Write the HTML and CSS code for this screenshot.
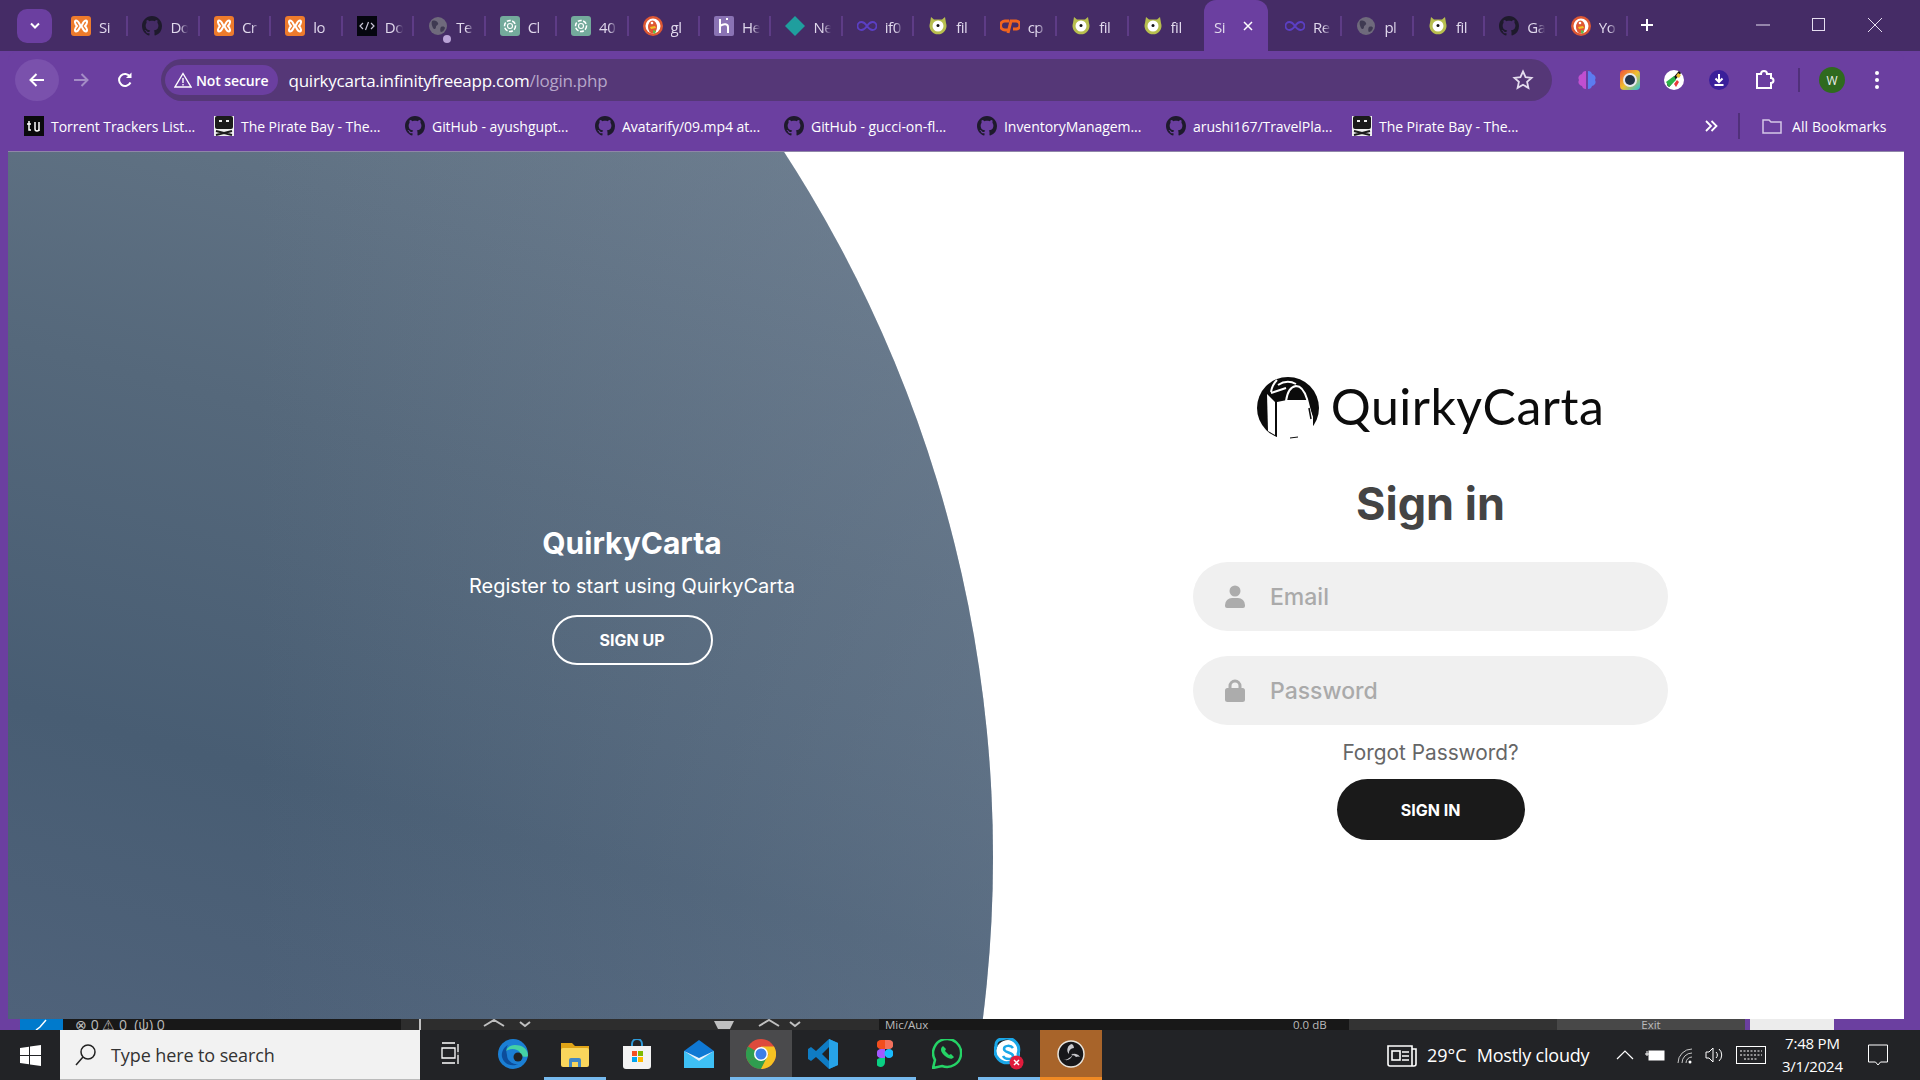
FILE: index.html
```html
<!DOCTYPE html>
<html lang="en">
<head>
  <meta charset="UTF-8" />
  <title>Sign in | QuirkyCarta</title>
  <link rel="stylesheet" href="styles.css">
</head>
<body>

  <svg class="defs" width="0" height="0">
    <symbol id="i-xampp" viewBox="0 0 20 20">
      <rect width="20" height="20" rx="3" fill="#ee7b2c"/>
      <path d="M5 4.500c3 0 3 4 5 5.500 2-1.500 2-5.500 5-5.500 1.500 0 1.500 3-1 5.500 2.500 2.500 2.500 5.500 1 5.500-3 0-3-4-5-5.500-2 1.500-2 5.500-5 5.500-1.500 0-1.500-3 1-5.500-2.500-2.500-2.500-5.500-1-5.500z" fill="none" stroke="#fff" stroke-width="2"/>
    </symbol>
    <symbol id="i-github" viewBox="0 0 16 16">
      <path fill="#1e1a2c" d="M8 0C3.58 0 0 3.58 0 8c0 3.54 2.29 6.53 5.47 7.59.4.07.55-.17.55-.38 0-.19-.01-.82-.01-1.49-2.01.37-2.53-.49-2.69-.94-.09-.23-.48-.94-.82-1.13-.28-.15-.68-.52-.01-.53.63-.01 1.08.58 1.23.82.72 1.21 1.87.87 2.33.66.07-.52.28-.87.51-1.07-1.78-.2-3.64-.89-3.64-3.95 0-.87.31-1.59.82-2.15-.08-.2-.36-1.02.08-2.12 0 0 .67-.21 2.2.82.64-.18 1.32-.27 2-.27.68 0 1.36.09 2 .27 1.53-1.04 2.2-.82 2.2-.82.44 1.1.16 1.92.08 2.12.51.56.82 1.27.82 2.15 0 3.07-1.87 3.75-3.65 3.95.29.25.54.73.54 1.48 0 1.07-.01 1.93-.01 2.2 0 .21.15.46.55.38A8.013 8.013 0 0016 8c0-4.42-3.58-8-8-8z"/>
    </symbol>
    <symbol id="i-dev" viewBox="0 0 20 20">
      <rect width="20" height="20" fill="#05060f"/>
      <path d="M6 7l-3 3 3 3M14 7l3 3-3 3M11.500 6l-3 8" fill="none" stroke="#c9c6d8" stroke-width="1.200"/>
    </symbol>
    <symbol id="i-globe" viewBox="0 0 20 20">
      <circle cx="10" cy="10" r="9" fill="#6f6a7c"/>
      <path d="M4 5c3-1 5 0 6 2s-2 2-2 4-2 3-3 1-2-5-1-7zM13 11c2-1 4 0 4 1-1 3-3 4-4 4s-1-4 0-5z" fill="#3f3a52"/>
    </symbol>
    <symbol id="i-gpt" viewBox="0 0 20 20">
      <rect width="20" height="20" rx="3" fill="#74aa9c"/>
      <circle cx="10" cy="10" r="5.500" fill="none" stroke="#fff" stroke-width="1.500" stroke-dasharray="4 1.500"/>
      <circle cx="10" cy="10" r="2.500" fill="none" stroke="#fff" stroke-width="1.100"/>
    </symbol>
    <symbol id="i-ddg" viewBox="0 0 20 20">
      <circle cx="10" cy="10" r="10" fill="#de5833"/>
      <circle cx="10" cy="10" r="7.500" fill="#fff"/>
      <ellipse cx="9.500" cy="11" rx="4.500" ry="6.500" fill="#de5833"/>
      <circle cx="9" cy="7" r="1.300" fill="#fff"/>
      <path d="M7 11l5-1 1 2-5 1z" fill="#f3c326"/>
      <path d="M10 14l3 1-1 3-2-1z" fill="#65bc46"/>
    </symbol>
    <symbol id="i-heroku" viewBox="0 0 20 20">
      <rect width="20" height="20" rx="2" fill="#8a73b4"/>
      <path d="M6 3v14M6 10c4-3 8-2 8 1v6M12 3l2 0" fill="none" stroke="#fff" stroke-width="2"/>
    </symbol>
    <symbol id="i-diamond" viewBox="0 0 20 20">
      <path d="M10 0l10 10-10 10L0 10z" fill="#1f9e9e"/>
    </symbol>
    <symbol id="i-inf" viewBox="0 0 20 20">
      <path d="M10 10c-2-3-3.500-4-5.500-4a4 4 0 000 8c2 0 3.500-1 5.500-4s3.500-4 5.500-4a4 4 0 010 8c-2 0-3.500-1-5.500-4z" fill="none" stroke="#5b3fc4" stroke-width="1.800"/>
    </symbol>
    <symbol id="i-monster" viewBox="0 0 20 20">
      <path d="M3 1l3 2.500h8L17 1l1 6a8.500 8.500 0 11-16 0z" fill="#b7be4e"/>
      <circle cx="10" cy="10" r="5.500" fill="#fff"/>
      <circle cx="10" cy="9.500" r="1.500" fill="#111"/>
    </symbol>
    <symbol id="i-cp" viewBox="0 0 20 20">
      <path d="M9 5H5a4 4 0 000 9h2.500M8 17L11 5h5a4 4 0 010 8h-3" fill="none" stroke="#f0641e" stroke-width="3"/>
    </symbol>
    <symbol id="i-tu" viewBox="0 0 20 20">
      <rect width="20" height="20" fill="#0a0a0c"/>
      <path d="M5 5v9h2M3 8h4M11 6v7a2 2 0 004 0V6M15 6v9" fill="none" stroke="#fff" stroke-width="1.500"/>
    </symbol>
    <symbol id="i-pirate" viewBox="0 0 20 20">
      <rect width="20" height="20" fill="#f0f0f0"/>
      <rect x="1" y="0" width="18" height="13" rx="2" fill="#1b1b1b"/>
      <rect x="5" y="4" width="3" height="2" fill="#eee"/>
      <rect x="12" y="4" width="3" height="2" fill="#eee"/>
      <path d="M2 15l16 4M18 15L2 19" stroke="#1b1b1b" stroke-width="2"/>
    </symbol>
    <symbol id="i-x" viewBox="0 0 12 12">
      <path d="M2 2l8 8M10 2l-8 8" fill="none" stroke="currentColor" stroke-width="1.500"/>
    </symbol>
  </svg>

  <div class="browser">
    <div class="tabstrip">
      <div class="tablist-btn">
        <svg width="12" height="8" viewBox="0 0 12 8"><path d="M2 1.500l4 4 4-4" fill="none" stroke="#fff" stroke-width="2"/></svg>
      </div>
      <div class="tab"><svg class="fav"><use href="#i-xampp"/></svg><span class="tab-title">Si</span></div>
      <div class="tab"><svg class="fav"><use href="#i-github"/></svg><span class="tab-title">Do</span></div>
      <div class="tab"><svg class="fav"><use href="#i-xampp"/></svg><span class="tab-title">Cr</span></div>
      <div class="tab"><svg class="fav"><use href="#i-xampp"/></svg><span class="tab-title">lo</span></div>
      <div class="tab"><svg class="fav"><use href="#i-dev"/></svg><span class="tab-title">Do</span></div>
      <div class="tab tab-loading"><svg class="fav"><use href="#i-globe"/></svg><span class="tab-title">Te</span></div>
      <div class="tab"><svg class="fav"><use href="#i-gpt"/></svg><span class="tab-title">Cl</span></div>
      <div class="tab"><svg class="fav"><use href="#i-gpt"/></svg><span class="tab-title">40</span></div>
      <div class="tab"><svg class="fav"><use href="#i-ddg"/></svg><span class="tab-title">gl</span></div>
      <div class="tab"><svg class="fav"><use href="#i-heroku"/></svg><span class="tab-title">He</span></div>
      <div class="tab"><svg class="fav"><use href="#i-diamond"/></svg><span class="tab-title">Ne</span></div>
      <div class="tab"><svg class="fav"><use href="#i-inf"/></svg><span class="tab-title">if0</span></div>
      <div class="tab"><svg class="fav"><use href="#i-monster"/></svg><span class="tab-title">fil</span></div>
      <div class="tab"><svg class="fav"><use href="#i-cp"/></svg><span class="tab-title">cp</span></div>
      <div class="tab"><svg class="fav"><use href="#i-monster"/></svg><span class="tab-title">fil</span></div>
      <div class="tab tab-before-active"><svg class="fav"><use href="#i-monster"/></svg><span class="tab-title">fil</span></div>
      <div class="tab tab-active"><span class="tab-title">Si</span><svg class="tab-close"><use href="#i-x"/></svg></div>
      <div class="tab"><svg class="fav"><use href="#i-inf"/></svg><span class="tab-title">Re</span></div>
      <div class="tab"><svg class="fav"><use href="#i-globe"/></svg><span class="tab-title">pl</span></div>
      <div class="tab"><svg class="fav"><use href="#i-monster"/></svg><span class="tab-title">fil</span></div>
      <div class="tab"><svg class="fav"><use href="#i-github"/></svg><span class="tab-title">Ga</span></div>
      <div class="tab"><svg class="fav"><use href="#i-ddg"/></svg><span class="tab-title">Yo</span></div>
      <svg class="new-tab" width="16" height="16" viewBox="0 0 16 16"><path d="M8 2v12M2 8h12" stroke="#fff" stroke-width="2"/></svg>
      <div class="win-controls">
        <svg width="16" height="16" viewBox="0 0 16 16"><path d="M1 8h14" stroke="#e6def0" stroke-width="1"/></svg>
        <svg width="16" height="16" viewBox="0 0 16 16"><rect x="1.500" y="1.500" width="12" height="12" fill="none" stroke="#e6def0"/></svg>
        <svg width="16" height="16" viewBox="0 0 16 16"><path d="M1 1l14 14M15 1L1 15" stroke="#e6def0"/></svg>
      </div>
    </div>

    <div class="window">
      <div class="toolbar">
        <div class="nav-btn nav-back">
          <svg width="20" height="20" viewBox="0 0 20 20"><path d="M17 10H4M9.500 4L3.500 10l6 6" fill="none" stroke="#fff" stroke-width="2"/></svg>
        </div>
        <div class="nav-btn">
          <svg width="20" height="20" viewBox="0 0 20 20"><path d="M3 10h13M10.500 4l6 6-6 6" fill="none" stroke="#a48cc6" stroke-width="2"/></svg>
        </div>
        <div class="nav-btn">
          <svg width="20" height="20" viewBox="0 0 20 20"><path d="M15.500 12.500A6 6 0 1115 6.500" fill="none" stroke="#fff" stroke-width="2"/><path d="M16.500 2.500v5.500H11z" fill="#fff"/></svg>
        </div>
        <div class="omnibox">
          <div class="security-chip">
            <svg width="18" height="16" viewBox="0 0 18 16"><path d="M9 1.500L1 15h16zM9 6v5M9 12v1.500" fill="none" stroke="#fff" stroke-width="1.400"/></svg>
            <span>Not secure</span>
          </div>
          <div class="url">quirkycarta.infinityfreeapp.com<span class="url-path">/login.php</span></div>
          <svg class="star" width="22" height="22" viewBox="0 0 22 22"><path d="M11 2.500l2.600 5.600 6 .7-4.500 4.100 1.300 6L11 15.800l-5.400 3.100 1.300-6-4.500-4.100 6-.7z" fill="none" stroke="#e4dcee" stroke-width="1.800"/></svg>
        </div>
        <div class="ext-icons">
          <svg width="20" height="22" viewBox="0 0 20 22"><path d="M9 2a4 4 0 00-4 3 4 4 0 00-3 6 4 4 0 003 6 4 4 0 004 3z" fill="#c04fd0"/><path d="M11 2a4 4 0 014 3 4 4 0 013 6 4 4 0 01-3 6 4 4 0 01-4 3z" fill="#5c7cf0"/></svg>
          <svg width="20" height="22" viewBox="0 0 20 22"><defs><linearGradient id="cam" x1="0" y1="0" x2="1" y2="1"><stop offset="0" stop-color="#f0503c"/><stop offset=".5" stop-color="#f0c030"/><stop offset="1" stop-color="#20c0e0"/></linearGradient></defs><rect y="1" width="20" height="20" rx="4" fill="url(#cam)"/><circle cx="10" cy="11" r="7" fill="#e8e8f0"/><circle cx="10" cy="11" r="5" fill="#23324a"/></svg>
          <svg width="22" height="22" viewBox="0 0 22 22"><circle cx="11" cy="11" r="10" fill="#fff"/><path d="M17 3L5 17" stroke="#111" stroke-width="3"/><path d="M3 13l8-6 2 4-7 7z" fill="#2cb34a"/><path d="M11 15l3-4 2 2-3 5z" fill="#e83c3c"/><path d="M15 4l3 2-2 3-3-2z" fill="#f0c030"/></svg>
          <svg width="22" height="22" viewBox="0 0 22 22"><circle cx="11" cy="11" r="10" fill="#3a1f9a"/><path d="M11 5v7M7.500 9.500L11 13l3.500-3.500M6.500 16h9" fill="none" stroke="#fff" stroke-width="2"/></svg>
          <svg width="22" height="22" viewBox="0 0 22 22"><path d="M4 5h4a3 3 0 016 0h4v4a2.500 2.500 0 010 5v5H4z" fill="none" stroke="#fff" stroke-width="2"/></svg>
          <span class="toolbar-sep"></span>
          <span class="avatar">W</span>
          <svg class="kebab" width="6" height="20" viewBox="0 0 6 20"><circle cx="3" cy="3" r="2" fill="#fff"/><circle cx="3" cy="10" r="2" fill="#fff"/><circle cx="3" cy="17" r="2" fill="#fff"/></svg>
        </div>
      </div>

      <div class="bookmarks">
        <a class="bookmark bm-1"><svg class="fav"><use href="#i-tu"/></svg>Torrent Trackers List...</a>
        <a class="bookmark bm-2"><svg class="fav"><use href="#i-pirate"/></svg>The Pirate Bay - The...</a>
        <a class="bookmark bm-3"><svg class="fav"><use href="#i-github"/></svg>GitHub - ayushgupt...</a>
        <a class="bookmark bm-4"><svg class="fav"><use href="#i-github"/></svg>Avatarify/09.mp4 at...</a>
        <a class="bookmark bm-5"><svg class="fav"><use href="#i-github"/></svg>GitHub - gucci-on-fl...</a>
        <a class="bookmark bm-6"><svg class="fav"><use href="#i-github"/></svg>InventoryManagem...</a>
        <a class="bookmark bm-7"><svg class="fav"><use href="#i-github"/></svg>arushi167/TravelPla...</a>
        <a class="bookmark bm-8"><svg class="fav"><use href="#i-pirate"/></svg>The Pirate Bay - The...</a>
        <svg class="bm-more" width="14" height="12" viewBox="0 0 14 12"><path d="M2 1l5 5-5 5M7.500 1l5 5-5 5" fill="none" stroke="#fff" stroke-width="1.800"/></svg>
        <span class="bm-sep"></span>
        <a class="bookmark all-bm">
          <svg width="20" height="16" viewBox="0 0 20 16"><path d="M1 2h6l2 2h10v11H1z" fill="none" stroke="#d5c8e6" stroke-width="1.500"/></svg>
          All Bookmarks
        </a>
      </div>

      <main class="page">
        <section class="panel">
          <div class="panel-content">
            <h3>QuirkyCarta</h3>
            <p>Register to start using QuirkyCarta</p>
            <button class="btn-outline" type="button">SIGN UP</button>
          </div>
        </section>

        <section class="signin">
          <div class="brand">
            <svg class="brand-logo" width="62" height="62" viewBox="0 0 62 62">
              <circle cx="31" cy="31" r="31" fill="#0b0b0b"/>
              <path d="M10 17l8 8v33l-7-4z" fill="#fff"/>
              <path d="M20 25l10-2h20l6 17v12l-9 10H20z" fill="#fff"/>
              <path d="M20 3Q15 8 14 15" fill="none" stroke="#fff" stroke-width="2"/>
              <path d="M14 16l15-5" fill="none" stroke="#fff" stroke-width="2"/>
              <path d="M29 24Q31 10 39 9q7 0 11 13l5 20" fill="none" stroke="#fff" stroke-width="2"/>
              <path d="M21 8q9-6 18-1" fill="none" stroke="#fff" stroke-width="2"/>
              <path d="M52 31l2 11" stroke="#0b0b0b" stroke-width="1.500"/>
              <path d="M33 61l8-1" stroke="#0b0b0b" stroke-width="1"/>
            </svg>
            <span class="brand-name">QuirkyCarta</span>
          </div>
          <h2>Sign in</h2>
          <form class="signin-form">
            <label class="field">
              <svg width="20" height="23" viewBox="0 0 20 23"><circle cx="10" cy="6" r="5.500" fill="#acacac"/><path d="M0 20a7 7 0 017-7h6a7 7 0 017 7v1a2 2 0 01-2 2H2a2 2 0 01-2-2z" fill="#acacac"/></svg>
              <input type="text" placeholder="Email">
            </label>
            <label class="field">
              <svg width="20" height="23" viewBox="0 0 20 23"><path d="M5 10V7a5 5 0 0110 0v3" fill="none" stroke="#acacac" stroke-width="3"/><rect y="9" width="20" height="14" rx="2.500" fill="#acacac"/></svg>
              <input type="password" placeholder="Password">
            </label>
            <a class="forgot">Forgot Password?</a>
            <button class="btn-solid" type="button">SIGN IN</button>
          </form>
        </section>
      </main>
    </div>

    <div class="behind">
      <div class="behind-edge"></div>
      <div class="behind-vs"><svg width="16" height="11" viewBox="0 0 16 11"><path d="M2 11l4-3 6-7" fill="none" stroke="#fff" stroke-width="1.500"/></svg></div>
      <div class="behind-status">⊗ 0 ⚠ 0 &nbsp;(ψ) 0</div>
      <div class="behind-obs">
        <svg width="478" height="11" viewBox="0 0 478 11"><path d="M19 0v11M83 7l10-6 10 6M119 3l5 4 5-4M358 7l10-6 10 6M389 3l5 4 5-4" fill="none" stroke="#c0c0c0" stroke-width="2"/><path d="M313 2h20l-4 8h-12z" fill="#c0c0c0"/></svg>
      </div>
      <div class="behind-mic">Mic/Aux</div>
      <div class="behind-db">0.0 dB</div>
      <div class="behind-grey"></div>
      <div class="behind-exit">Exit</div>
      <div class="behind-white"></div>
      <div class="behind-purple"></div>
    </div>
  </div>

  <footer class="taskbar">
    <div class="start">
      <svg width="21" height="21" viewBox="0 0 21 21"><path d="M0 3l9-1.300V10H0zM10 1.500L21 0v10H10zM0 11h9v8.300L0 18zM10 11h11v10l-11-1.500z" fill="#fff"/></svg>
    </div>
    <div class="search">
      <svg width="22" height="24" viewBox="0 0 22 24"><circle cx="13" cy="9" r="7" fill="none" stroke="#222" stroke-width="1.500"/><path d="M8 14l-7 8" stroke="#222" stroke-width="1.500"/></svg>
      <span>Type here to search</span>
    </div>
    <div class="task-apps">
      <div class="app">
        <svg width="20" height="24" viewBox="0 0 20 24"><path d="M1 1h13M1 6h13v10H1zM1 21h13M17 2v20" fill="none" stroke="#fff" stroke-width="1.300"/><path d="M17 10v3" stroke="#222" stroke-width="1.500"/></svg>
      </div>
      <div class="app">
        <svg width="30" height="30" viewBox="0 0 30 30"><circle cx="15" cy="15" r="15" fill="#1b7fd4"/><path d="M30 17c0-8-7-11-13-11-6 0-9 4-10 7 3-3 8-4 12-2 3 1 4 4 3 6 4 1 8 1 8 0z" fill="#45d2a4"/><path d="M9 16c0 6 6 10 11 9-5 3-14 1-16-7-1-5 2-10 6-12-2 3-2 6-1 10z" fill="#0c4d9b"/><circle cx="20" cy="18" r="4.500" fill="#222"/></svg>
      </div>
      <div class="app app-open">
        <svg width="28" height="28" viewBox="0 0 28 28"><path d="M0 3h11l3 3h14v4H0z" fill="#e0a417"/><rect y="8" width="28" height="19" rx="2" fill="#f9d65c"/><path d="M8 27v-7a2 2 0 012-2h8a2 2 0 012 2v7h-3v-5h-6v5z" fill="#4287c4"/></svg>
      </div>
      <div class="app">
        <svg width="28" height="30" viewBox="0 0 28 30"><path d="M9 7V5a5 5 0 0110 0v2" fill="none" stroke="#2e9ad8" stroke-width="2"/><path d="M0 7h28v20a3 3 0 01-3 3H3a3 3 0 01-3-3z" fill="#f3f3f3"/><rect x="9" y="12" width="5" height="5" fill="#f25022"/><rect x="15" y="12" width="5" height="5" fill="#7fba00"/><rect x="9" y="18" width="5" height="5" fill="#00a4ef"/><rect x="15" y="18" width="5" height="5" fill="#ffb900"/></svg>
      </div>
      <div class="app">
        <svg width="30" height="28" viewBox="0 0 30 28"><path d="M0 11L15 0l15 11v17H0z" fill="#0f78d4"/><path d="M0 11l15 10 15-10v17H0z" fill="#3ec0f5"/><path d="M0 11l15 10 15-10-15 7z" fill="#e8f4fc"/></svg>
      </div>
      <div class="app app-open app-active">
        <svg width="30" height="30" viewBox="0 0 30 30"><circle cx="15" cy="15" r="15" fill="#de4a3c"/><path d="M15 15L2 22.500A15 15 0 0015 30l7.500-13z" fill="#2f9e4f"/><path d="M15 15l7.500 0L15 30A15 15 0 0028 7.500H15z" fill="#f5c222"/><path d="M15 15L2 22.500A15 15 0 012 7.500z" fill="#2f9e4f"/><circle cx="15" cy="15" r="7" fill="#fff"/><circle cx="15" cy="15" r="5.500" fill="#3d7fe8"/></svg>
      </div>
      <div class="app app-open">
        <svg width="30" height="30" viewBox="0 0 30 30"><path d="M21 0l9 4v22l-9 4L8 18l-5 4-3-2v-10l3-2 5 4z" fill="#0f7cc4"/><path d="M21 0l9 4v22l-9 4z" fill="#27a3e8"/><path d="M21 8l-7 7 7 7z" fill="#222"/></svg>
      </div>
      <div class="app app-open">
        <svg width="16" height="28" viewBox="0 0 16 28"><path d="M8 0h4a4.500 4.500 0 010 9H8z" fill="#f2705c"/><path d="M8 0H4a4.500 4.500 0 000 9h4z" fill="#f24e1e"/><path d="M8 9H4a4.500 4.500 0 000 9h4z" fill="#a259ff"/><circle cx="12" cy="13.500" r="4.500" fill="#1abcfe"/><path d="M8 18H4a4.500 4.500 0 104 4.500z" fill="#0acf83"/></svg>
      </div>
      <div class="app">
        <svg width="30" height="30" viewBox="0 0 30 30"><path d="M1 29l2-8A14 14 0 1110 27z" fill="none" stroke="#25d366" stroke-width="2.500"/><path d="M10 8c-2 2-1 6 3 9s7 4 9 1l-3-3-2 1-4-4 1-2-3-3z" fill="#25d366"/></svg>
      </div>
      <div class="app app-open app-skype">
        <svg width="30" height="32" viewBox="0 0 30 32"><circle cx="14" cy="14" r="12" fill="#fff"/><path d="M8 1a6 6 0 00-6 7 12 12 0 0015 16 6 6 0 007-8A12 12 0 008 1z" fill="none" stroke="#1aa7e8" stroke-width="3"/><path d="M19 10c-2-3-9-3-9 1s9 3 9 7-8 4-10 0" fill="none" stroke="#1aa7e8" stroke-width="2.500"/><circle cx="22.500" cy="24.500" r="7" fill="#e01b3c"/><path d="M20 22l5 5M25 22l-5 5" stroke="#fff" stroke-width="1.500"/></svg>
      </div>
      <div class="app app-obs">
        <svg width="28" height="28" viewBox="0 0 28 28"><circle cx="14" cy="14" r="13" fill="#17171a" stroke="#e8e4dc" stroke-width="1.500"/><path d="M15 4a6 6 0 00-3 10 5 5 0 015-6 5 5 0 00-2-4zM6 19a6 6 0 009-7 5 5 0 01-3 6 5 5 0 01-6 1zM23 17a6 6 0 00-9-2 5 5 0 015 2 5 5 0 014 0z" fill="#c8c8cc"/></svg>
      </div>
    </div>

    <div class="tray">
      <svg class="news" width="30" height="24" viewBox="0 0 30 24"><path d="M1 3h24v20H3a2 2 0 01-2-2zM25 6h4v15a2 2 0 01-2 2h-2" fill="none" stroke="#fff" stroke-width="1.600"/><rect x="5" y="8" width="8" height="9" fill="none" stroke="#fff" stroke-width="1.600"/><path d="M15 9h7M15 13h7M15 17h7" stroke="#fff" stroke-width="1.600"/></svg>
      <span class="temp">29°C</span>
      <span class="weather">Mostly cloudy</span>
      <svg class="chev" width="18" height="10" viewBox="0 0 18 10"><path d="M1 9l8-8 8 8" fill="none" stroke="#fff" stroke-width="1.200"/></svg>
      <svg class="tray-ic" width="20" height="14" viewBox="0 0 20 14"><rect x="4" y="3" width="15" height="9" fill="#fff" stroke="#fff"/><path d="M0 6h4M2 3v5" stroke="#fff"/></svg>
      <svg class="tray-ic" width="18" height="18" viewBox="0 0 18 18"><path d="M2 17A14 14 0 0116 3M6 17A10 10 0 0116 7M10 17a6 6 0 016-6" fill="none" stroke="#c8c8c8"/><circle cx="14" cy="16" r="1.500" fill="#fff"/></svg>
      <svg class="tray-ic" width="20" height="18" viewBox="0 0 20 18"><path d="M1 6h3l4-4v14l-4-4H1zM11 6a4 4 0 010 6M14 3a8 8 0 010 12" fill="none" stroke="#fff" stroke-width="1"/></svg>
      <svg class="tray-ic" width="30" height="18" viewBox="0 0 30 18"><rect x=".5" y=".5" width="29" height="17" fill="none" stroke="#fff"/><path d="M4 5h22M4 9h22M8 13h14" stroke="#fff" stroke-dasharray="2 1.500"/></svg>
      <div class="clock"><div>7:48 PM</div><div>3/1/2024</div></div>
      <svg class="notif" width="20" height="22" viewBox="0 0 20 22"><path d="M.500 1h19v17h-7l-2.500 3-2.500-3h-7z" fill="none" stroke="#fff"/></svg>
    </div>
  </footer>

</body>
</html>
```

FILE: styles.css
```css
* {
  box-sizing: border-box;
}

html, body {
  margin: 0;
  height: 100%;
}

body {
  width: 1920px;
  height: 1080px;
  overflow: hidden;
  display: flex;
  flex-direction: column;
  background: #6b3fa0;
  font-family: "Open Sans", "Noto Sans", sans-serif;
}

.defs {
  position: absolute;
}

.browser {
  height: 1030px;
  display: flex;
  flex-direction: column;
}

/* tab strip */

.tabstrip {
  height: 51px;
  flex: none;
  display: flex;
  align-items: flex-start;
  background: #452c66;
  padding-left: 17px;
  color: #e0d8ec;
}

.tablist-btn {
  width: 35px;
  height: 34px;
  margin: 9px 5px 0 0;
  flex: none;
  display: flex;
  align-items: center;
  justify-content: center;
  background: #6b3fa0;
  border-radius: 10px;
}

.tab {
  width: 71.45px;
  height: 42px;
  margin-top: 9px;
  flex: none;
  display: flex;
  align-items: flex-start;
  gap: 8px;
  padding: 7px 0 0 14px;
  background: linear-gradient(#5e3c86, #5e3c86) right 7px / 2px 20px no-repeat;
}

.tab .fav {
  width: 20px;
  height: 20px;
  flex: none;
}

.tab-title {
  width: 20px;
  white-space: nowrap;
  font-size: 15px;
  line-height: 22px;
  letter-spacing: -0.5px;
  -webkit-mask-image: linear-gradient(90deg, #000 50%, transparent 90%);
  mask-image: linear-gradient(90deg, #000 50%, transparent 90%);
}

.tab-before-active {
  background: none;
}

.tab-loading {
  position: relative;
}

.tab-loading::after {
  content: "";
  position: absolute;
  left: 29px;
  top: 26px;
  width: 8px;
  height: 8px;
  border-radius: 50%;
  background: #b9a3d6;
}

.tab-active {
  width: 64px;
  height: 51px;
  margin: 0 0 0 4px;
  padding: 16px 0 0 10px;
  gap: 8px;
  background: #6b3fa0;
  border-radius: 12px 12px 0 0;
}

.tab-active + .tab {
  margin-left: 3px;
}

.tab-close {
  width: 12px;
  height: 12px;
  margin-top: 4px;
  color: #fff;
  flex: none;
}

.new-tab {
  margin: 17px 0 0 11px;
}

.win-controls {
  margin-left: auto;
  display: flex;
  gap: 40px;
  padding: 17px 37px 0 0;
}

/* toolbar */

.window {
  flex: 1;
  margin: 0 16px 0 8px;
  min-height: 0;
  display: flex;
  flex-direction: column;
}

.toolbar {
  height: 50px;
  flex: none;
  display: flex;
  align-items: center;
  background: #6b3fa0;
  border-radius: 10px 10px 0 0;
  padding: 8px 0 0 7px;
}

.nav-btn {
  width: 44px;
  height: 42px;
  flex: none;
  display: flex;
  align-items: center;
  justify-content: center;
  border-radius: 50%;
}

.nav-back {
  background: #7a51ac;
}

.omnibox {
  width: 1391px;
  height: 42px;
  margin-left: 14px;
  flex: none;
  display: flex;
  align-items: center;
  padding: 0 18px 0 4px;
  background: #553777;
  border-radius: 21px;
}

.security-chip {
  height: 30px;
  display: flex;
  align-items: center;
  gap: 4px;
  padding: 0 9px;
  background: #6b3fa0;
  border-radius: 15px;
  color: #fff;
  font-size: 14px;
  font-weight: 600;
  letter-spacing: -0.1px;
}

.url {
  margin-left: 11px;
  color: #fff;
  font-size: 17px;
  letter-spacing: -0.25px;
}

.url-path {
  color: #b5a6c9;
}

.star {
  margin-left: auto;
}

.ext-icons {
  flex: 1;
  display: flex;
  align-items: center;
  padding-left: 25px;
  gap: 23px;
}

.toolbar-sep {
  width: 2px;
  height: 24px;
  background: #50307a;
}

.avatar {
  width: 26px;
  height: 26px;
  margin-left: -4px;
  display: flex;
  align-items: center;
  justify-content: center;
  border-radius: 50%;
  background: #2f6a1e;
  color: #eee;
  font-size: 12px;
}

.kebab {
  margin-left: 6px;
}

/* bookmarks */

.bookmarks {
  height: 51px;
  flex: none;
  display: flex;
  align-items: center;
  background: #6b3fa0;
  padding-left: 16px;
  color: #fff;
  font-size: 14px;
  letter-spacing: -0.05px;
  border-bottom: 1px solid #8f86a8;
}

.bookmark {
  display: flex;
  align-items: center;
  gap: 7px;
  white-space: nowrap;
  flex: none;
}

.bookmark .fav {
  width: 20px;
  height: 20px;
  flex: none;
}

.bm-1 { width: 190px; }
.bm-2 { width: 191px; }
.bm-3 { width: 190px; }
.bm-4 { width: 189px; }
.bm-5 { width: 193px; }
.bm-6 { width: 189px; }
.bm-7 { width: 186px; }
.bm-8 { width: 352px; }

.bm-sep {
  width: 2px;
  height: 26px;
  margin: 0 22px 0 20px;
  background: #50307a;
}

.all-bm {
  gap: 10px;
  letter-spacing: 0.1px;
}

/* login page */

.page {
  flex: 1;
  min-height: 0;
  display: grid;
  grid-template-columns: 985px 1fr;
  background: #fff;
  overflow: hidden;
}

.panel {
  display: flex;
  align-items: center;
  justify-content: center;
  padding: 18px 0 0 263px;
  background:
    linear-gradient(90deg, rgba(130, 145, 165, 0) 25%, rgba(130, 145, 165, 0.3) 100%),
    linear-gradient(195deg, #68798a 0%, #55687b 40%, #485d73 72%, #4f627a 100%);
  clip-path: circle(1294px at -309px 705px);
  color: #fff;
}

.panel-content {
  width: 400px;
  display: flex;
  flex-direction: column;
  align-items: center;
  text-align: center;
  font-family: "Inter", sans-serif;
}

.panel-content h3 {
  margin: 0;
  font-size: 30px;
  font-weight: 700;
  line-height: 38px;
}

.panel-content p {
  margin: 9px 0 14px;
  font-size: 20px;
  line-height: 30px;
  white-space: nowrap;
}

.btn-outline {
  width: 161px;
  height: 50px;
  background: transparent;
  border: 2px solid #fff;
  border-radius: 25px;
  color: #fff;
  font: 700 16px "Inter", sans-serif;
}

.signin {
  display: flex;
  flex-direction: column;
  align-items: center;
  padding: 225px 36px 0 0;
}

.brand {
  display: flex;
  align-items: center;
  gap: 12px;
  height: 62px;
}

.brand-name {
  padding-bottom: 4px;
  font-family: "Lato", sans-serif;
  font-size: 50px;
  letter-spacing: 0.5px;
  color: #0c0c0c;
}

.signin h2 {
  margin: 34px 0 27px;
  font: 700 45px/62px "Inter", sans-serif;
  color: #444;
}

.signin-form {
  display: flex;
  flex-direction: column;
  align-items: center;
}

.field {
  width: 475px;
  height: 69px;
  margin-bottom: 25px;
  display: flex;
  align-items: center;
  gap: 23px;
  padding: 0 32px;
  background: #f0f0f0;
  border-radius: 35px;
}

.field svg {
  flex: none;
}

.field input {
  flex: 1;
  min-width: 0;
  border: 0;
  outline: 0;
  background: none;
  font: 500 23px "Inter", sans-serif;
}

.field input::placeholder {
  color: #aaa;
}

.field + .field {
  margin-bottom: 0;
}

.forgot {
  margin: 14px 0 12px;
  font: 400 20.800px/28px "Inter", sans-serif;
  color: #666;
}

.btn-solid {
  width: 188px;
  height: 61px;
  background: #1a1a1a;
  border: 0;
  border-radius: 31px;
  color: #fff;
  font: 700 16px "Inter", sans-serif;
}

/* what shows of the windows behind */

.behind {
  height: 11px;
  flex: none;
  display: flex;
  overflow: hidden;
  color: #bbb;
  font-size: 11.500px;
  line-height: 11px;
}

.behind > div {
  flex: none;
  white-space: nowrap;
  overflow: hidden;
}

.behind-edge { width: 20px; background: #6b3fa0; }
.behind-vs { width: 43px; background: #007acc; text-align: center; }
.behind-status { width: 338px; background: #181818; padding-left: 12px; font-size: 14px; }
.behind-obs { width: 478px; background: #2d2d2d; }
.behind-mic { width: 410px; background: #181818; padding-left: 6px; }
.behind-db { width: 60px; background: #181818; padding-left: 4px; }
.behind-grey { width: 208px; background: #333; }
.behind-exit { width: 188px; background: #484848; text-align: center; margin-right: 5px; }
.behind-white { width: 84px; background: #ececec; }
.behind-purple { width: 86px; background: #6b3fa0; }

/* taskbar */

.taskbar {
  height: 50px;
  flex: none;
  display: flex;
  align-items: center;
  background: #222326;
  color: #fff;
}

.start {
  width: 60px;
  display: flex;
  justify-content: center;
}

.search {
  width: 360px;
  height: 50px;
  display: flex;
  align-items: center;
  gap: 14px;
  padding-left: 15px;
  background: #f2f2f2;
  color: #333;
  font-size: 18px;
  letter-spacing: -0.1px;
  border-bottom: 1px solid #bbb;
}

.task-apps {
  display: flex;
  height: 50px;
}

.app {
  width: 62px;
  height: 50px;
  display: flex;
  align-items: center;
  justify-content: center;
  border-bottom: 3px solid transparent;
}

.app-open {
  border-bottom-color: #76b9ed;
}

.app-active {
  background: #4a4a4c;
}

.app-obs {
  background: #a8642a;
  border-bottom-color: #f08a24;
}

.tray {
  flex: 1;
  display: flex;
  align-items: center;
  padding-left: 285px;
  font-size: 18px;
}

.temp {
  margin-left: 10px;
}

.weather {
  margin-left: 10px;
  letter-spacing: -0.2px;
}

.chev {
  margin-left: 27px;
}

.tray-ic {
  margin-left: 11px;
}

.clock {
  width: 90px;
  margin-left: 1px;
  text-align: center;
  font-size: 15px;
  line-height: 23px;
  letter-spacing: -0.2px;
}

.notif {
  margin-left: 11px;
}
```
